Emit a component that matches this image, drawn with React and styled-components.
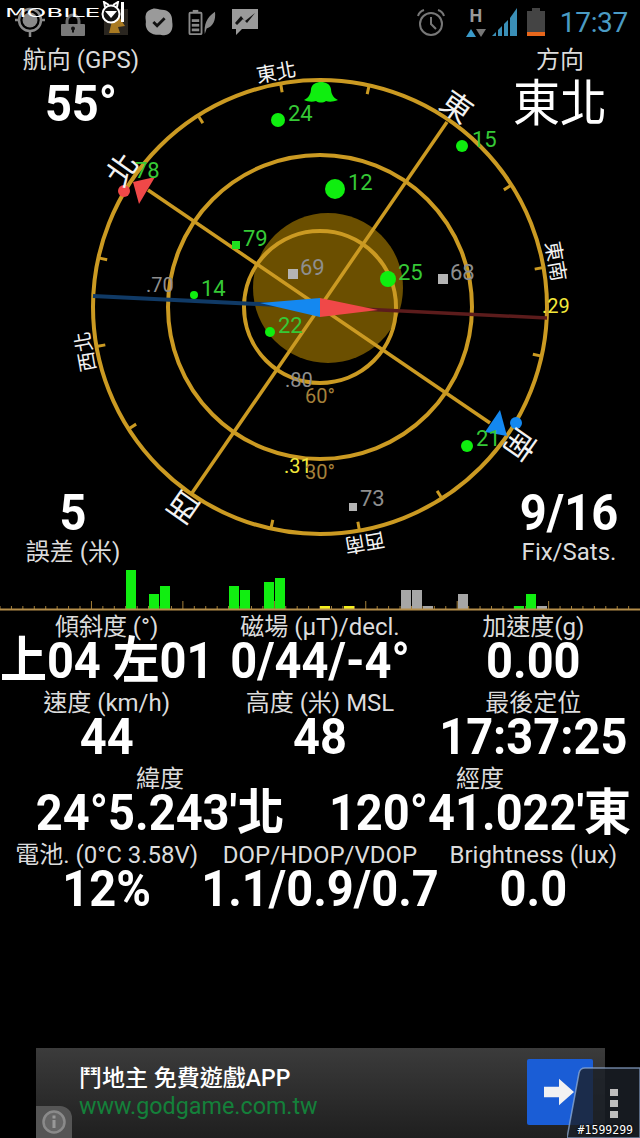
import React from 'react';
import styled, { createGlobalStyle } from 'styled-components';

const CJK = '"Noto Sans CJK TC", sans-serif';
const FONT = `Roboto, ${CJK}`;

const GOLD = '#cb9a22';
const CX = 320;
const CY = 307;

const polar = (r, deg) => {
    const a = (deg * Math.PI) / 180;
    return [CX + r * Math.sin(a), CY - r * Math.cos(a)];
};

// ticks every 22.5 degrees, the four axes are drawn as full lines
const tickAngles = [-32.5, -10, 12.5, 57.5, 80, 102.5, 147.5, 170, 192.5, 237.5, 260, 282.5];

const compassLabels = [
    { text: '北', x: 120, y: 168, rot: -55, size: 31 },
    { text: '東', x: 458, y: 105, rot: 35, size: 31 },
    { text: '南', x: 522, y: 446, rot: 125, size: 31 },
    { text: '西', x: 182, y: 509, rot: 215, size: 31 },
    { text: '東北', x: 276, y: 71, rot: -10, size: 20 },
    { text: '東南', x: 557, y: 261, rot: 80, size: 20 },
    { text: '西南', x: 365, y: 544, rot: 170, size: 20 },
    { text: '西北', x: 84, y: 352, rot: 260, size: 20 },
];

const greenSats = [
    { id: '24', x: 278, y: 120, r: 7, lx: 288, ly: 113 },
    { id: '12', x: 335, y: 189, r: 10, lx: 348, ly: 182 },
    { id: '15', x: 462, y: 146, r: 6, lx: 472, ly: 139 },
    { id: '25', x: 388, y: 279, r: 8, lx: 398, ly: 272 },
    { id: '14', x: 194, y: 295, r: 4, lx: 201, ly: 288 },
    { id: '22', x: 270, y: 332, r: 5, lx: 278, ly: 325 },
    { id: '21', x: 467, y: 446, r: 6, lx: 476, ly: 438 },
];

const squareSats = [
    { id: '79', x: 236, y: 245, s: 8, lx: 243, ly: 238, color: '#1fe01f', text: '#36c936' },
    { id: '69', x: 293, y: 274, s: 10, lx: 300, ly: 267, color: '#b4b4b4', text: '#8e8e8e' },
    { id: '68', x: 443, y: 279, s: 10, lx: 450, ly: 272, color: '#b4b4b4', text: '#8e8e8e' },
    { id: '73', x: 353, y: 507, s: 8, lx: 360, ly: 498, color: '#b4b4b4', text: '#8e8e8e' },
];

const dials = [
    { text: '.70', x: 146, y: 292, color: '#8e8e8e' },
    { text: '.80', x: 285, y: 387, color: '#8e8e8e' },
    { text: '.29', x: 542, y: 313, color: '#f2e83a' },
    { text: '.31', x: 284, y: 473, color: '#f2e83a' },
    { text: '60°', x: 305, y: 403, color: '#a5803a' },
    { text: '30°', x: 305, y: 479, color: '#a5803a' },
];

const bars = [
    { x: 126, top: 570, c: '#11ee11' },
    { x: 149, top: 594, c: '#11ee11' },
    { x: 160, top: 586, c: '#11ee11' },
    { x: 229, top: 586, c: '#11ee11' },
    { x: 240, top: 590, c: '#11ee11' },
    { x: 264, top: 582, c: '#11ee11' },
    { x: 275, top: 578, c: '#11ee11' },
    { x: 320, top: 606, c: '#f4f01e' },
    { x: 344, top: 606, c: '#f4f01e' },
    { x: 401, top: 590, c: '#a6a6a6' },
    { x: 412, top: 590, c: '#a6a6a6' },
    { x: 423, top: 606, c: '#a6a6a6' },
    { x: 458, top: 594, c: '#a6a6a6' },
    { x: 514, top: 606, c: '#11ee11' },
    { x: 526, top: 594, c: '#11ee11' },
    { x: 537, top: 606, c: '#a6a6a6' },
];

const chartTicks = Array.from({ length: 56 }, (_, i) => i * 11.43);

const rows = [
    {
        cols: 3,
        items: [
            ['傾斜度 (°)', '上04 左01'],
            ['磁場 (µT)/decl.', '0/44/-4°'],
            ['加速度(g)', '0.00'],
        ],
    },
    {
        cols: 3,
        items: [
            ['速度 (km/h)', '44'],
            ['高度 (米) MSL', '48'],
            ['最後定位', '17:37:25'],
        ],
    },
    {
        cols: 2,
        items: [
            ['緯度', "24°5.243'北"],
            ['經度', "120°41.022'東"],
        ],
    },
    {
        cols: 3,
        items: [
            ['電池. (0°C 3.58V)', '12%'],
            ['DOP/HDOP/VDOP', '1.1/0.9/0.7'],
            ['Brightness (lux)', '0.0'],
        ],
    },
];

function CompassDrawing() {
    return (
        <CompassSvg viewBox="0 40 640 520">
            <circle cx="328" cy="288" r="75" fill="#6b4f00" />
            {[76, 152, 227].map((r) => (
                <circle key={r} cx={CX} cy={CY} r={r} fill="none" stroke={GOLD} strokeWidth="4" />
            ))}
            <line x1="148" y1="190" x2="490" y2="423" stroke={GOLD} strokeWidth="3.5" />
            <line x1="447" y1="122" x2="192" y2="493" stroke={GOLD} strokeWidth="3.5" />
            {tickAngles.map((deg) => {
                const [x1, y1] = polar(227, deg);
                const [x2, y2] = polar(218, deg);
                return <line key={deg} x1={x1} y1={y1} x2={x2} y2={y2} stroke={GOLD} strokeWidth="3" />;
            })}

            <line x1="93" y1="296" x2="320" y2="307" stroke="#103a66" strokeWidth="4" />
            <line x1="320" y1="307" x2="547" y2="318" stroke="#5c1c1c" strokeWidth="3.5" />
            <polygon points="260,303 320,298 320,317" fill="#1488f0" />
            <polygon points="320,298 378,310 320,317" fill="#f04848" />

            <circle cx="124" cy="191" r="6" fill="#f04848" />
            <polygon points="133,182 155,177 139,204" fill="#f04848" />
            <circle cx="516" cy="423" r="6" fill="#1488f0" />
            <polygon points="500,410 485,432 507,436" fill="#1488f0" />

            <path
                d="M304 100 C309 98 311 93 311 89 C312 84 316 82 321 82 C326 82 330 84 331 89 C331 93 333 98 338 100 C333 102 329 102 326 101 C323 103 319 103 316 101 C313 102 308 102 304 100 Z"
                fill="#0fee0f"
            />

            {compassLabels.map((l) => (
                <CompassLabel
                    key={l.text}
                    x={l.x}
                    y={l.y}
                    fontSize={l.size}
                    transform={`rotate(${l.rot} ${l.x} ${l.y})`}
                >
                    {l.text}
                </CompassLabel>
            ))}

            {greenSats.map((s) => (
                <g key={s.id}>
                    <circle cx={s.x} cy={s.y} r={s.r} fill="#0fee0f" />
                    <SatLabel x={s.lx} y={s.ly} fill="#36c936">
                        {s.id}
                    </SatLabel>
                </g>
            ))}
            {squareSats.map((s) => (
                <g key={s.id}>
                    <rect x={s.x - s.s / 2} y={s.y - s.s / 2} width={s.s} height={s.s} fill={s.color} />
                    <SatLabel x={s.lx} y={s.ly} fill={s.text}>
                        {s.id}
                    </SatLabel>
                </g>
            ))}
            <SatLabel x={135} y={170} fill="#36c936">
                78
            </SatLabel>
            {dials.map((d) => (
                <DialText key={d.text} x={d.x} y={d.y} fill={d.color}>
                    {d.text}
                </DialText>
            ))}
        </CompassSvg>
    );
}

function SignalChart() {
    return (
        <ChartSvg viewBox="0 565 640 47">
            {chartTicks.map((x, i) => {
                const tall = i % 8 === 0 && i > 0;
                return <line key={x} x1={x} y1={tall ? 601 : 606} x2={x} y2="609" stroke="#a5803a" strokeWidth="1" />;
            })}
            {bars.map((b) => (
                <rect key={b.x} x={b.x} y={b.top} width="10" height={609 - b.top} fill={b.c} />
            ))}
            <line x1="0" y1="609.5" x2="640" y2="609.5" stroke="#b58e4a" strokeWidth="2" />
        </ChartSvg>
    );
}

function LeftIcons() {
    return (
        <IconRow>
            <Slot $w={43}>
                <svg width="30" height="34" viewBox="0 0 30 34" fill="none" stroke="#8a8a8a" strokeWidth="2.5">
                    <circle cx="15" cy="15" r="11" />
                    <circle cx="15" cy="15" r="7.5" fill="#8a8a8a" stroke="none" />
                    <path d="M15 26v6M0 15h4M26 15h4" />
                </svg>
            </Slot>
            <Slot $w={43}>
                <svg width="24" height="28" viewBox="0 0 24 28">
                    <path d="M6 17V13a6 6 0 0 1 12 0v4" fill="none" stroke="#6f6f6f" strokeWidth="3" />
                    <rect x="0" y="16" width="24" height="12" rx="1" fill="#7a7a7a" />
                    <circle cx="12" cy="20.5" r="2" fill="#111" />
                    <rect x="11" y="20.5" width="2" height="4" fill="#111" />
                </svg>
            </Slot>
            <Slot $w={43}>
                <svg width="24" height="26" viewBox="0 0 24 26">
                    <rect width="24" height="26" fill="#2a2620" />
                    <path d="M5 24 L8 12 L15 8 L21 17 L14 18 L16 24 Z" fill="#a97a22" />
                </svg>
            </Slot>
            <Slot $w={43}>
                <svg width="30" height="30" viewBox="0 0 32 32">
                    <path
                        d="M9 2 C13 1 15 3 19 3 C26 3 30 8 30 14 C30 17 31 19 30 23 C29 28 24 31 20 30 C16 29 14 30 10 29 C4 27 1 22 2 16 C2 13 1 11 2 8 C3 4 6 3 9 2 Z"
                        fill="#9a9a9a"
                    />
                    <path d="M10 16 l4 4 l8 -8" fill="none" stroke="#111" strokeWidth="3" />
                </svg>
            </Slot>
            <Slot $w={43}>
                <svg width="30" height="26" viewBox="0 0 30 28">
                    <rect x="1.5" y="4" width="13" height="23" rx="1" fill="none" stroke="#8a8a8a" strokeWidth="2" />
                    <rect x="5" y="1" width="6" height="3" fill="#8a8a8a" />
                    <rect x="4" y="11" width="8" height="3" fill="#8a8a8a" />
                    <rect x="4" y="16" width="8" height="3" fill="#8a8a8a" />
                    <rect x="4" y="21" width="8" height="3" fill="#8a8a8a" />
                    <path d="M18 27 C17 17 20 9 29 3 C30 12 27 19 20 21 Z" fill="#8a8a8a" />
                </svg>
            </Slot>
            <Slot $w={43}>
                <svg width="28" height="28" viewBox="0 0 28 28">
                    <path d="M1 1 H27 V21 H11 L5 27 V21 H1 Z" fill="#9a9a9a" />
                    <path d="M4 15 L10 8 L14 13 L24 5 L16 15 L12 11 L6 17 Z" fill="#111" />
                </svg>
            </Slot>
        </IconRow>
    );
}

function RightIcons() {
    return (
        <IconRow>
            <Slot $w={30}>
                <svg width="30" height="28" viewBox="0 0 30 28" fill="none" stroke="#777" strokeWidth="2">
                    <circle cx="15" cy="16" r="11" />
                    <path d="M15 9v7l5 5M2 8A9 9 0 0 1 8 2M28 8A9 9 0 0 0 22 2" />
                </svg>
            </Slot>
            <Slot $w={26} $ml={17}>
                <NetworkType>
                    H
                    <svg width="20" height="8" viewBox="0 0 20 8">
                        <polygon points="5,0 10,8 0,8" fill="#3a9ac9" />
                        <polygon points="10,0 20,0 15,8" fill="#777" />
                    </svg>
                </NetworkType>
            </Slot>
            <Slot $w={25} $ml={3}>
                <svg width="25" height="28" viewBox="0 0 25 28" fill="#3a8fb7">
                    <polygon points="0,28 4,24 4,28" />
                    <polygon points="6,22 10,18 10,28 6,28" />
                    <polygon points="12,16 16,12 16,28 12,28" />
                    <polygon points="18,10 25,0 25,28 18,28" />
                </svg>
            </Slot>
            <Slot $w={18} $ml={10}>
                <svg width="18" height="28" viewBox="0 0 18 28">
                    <rect x="5" y="0" width="8" height="3" fill="#444" />
                    <rect x="0" y="3" width="18" height="21" fill="#444" />
                    <rect x="0" y="24" width="18" height="4" fill="#e8671c" />
                </svg>
            </Slot>
            <Clock>17:37</Clock>
        </IconRow>
    );
}

function Readout({ label, value }) {
    return (
        <ReadoutBox>
            <ReadoutLabel>{label}</ReadoutLabel>
            <ReadoutValue>{value}</ReadoutValue>
        </ReadoutBox>
    );
}

export default function App() {
    return (
        <Page>
            <GlobalStyle />
            <StatusBar>
                <LeftIcons />
                <RightIcons />
            </StatusBar>
            <Watermark>
                <LogoText>MOBILE</LogoText>
                <svg width="24" height="24" viewBox="0 0 24 24">
                    <circle cx="10" cy="13" r="8.5" fill="#111" stroke="#fff" strokeWidth="2" />
                    <path d="M4 6 L3 1 L8 4 M16 6 L17 1 L12 4" fill="none" stroke="#fff" strokeWidth="2" />
                    <path d="M4 10 L16 10 L10 17 Z" fill="#fff" />
                    <rect x="20" y="1" width="3" height="20" fill="#fff" />
                </svg>
            </Watermark>

            <CompassPanel>
                <CompassDrawing />
                <Corner $top="1px" $left="0" $width="162px">
                    <CornerLabel>航向 (GPS)</CornerLabel>
                    <CornerValue>55°</CornerValue>
                </Corner>
                <Corner $top="1px" $right="0" $width="160px">
                    <CornerLabel>方向</CornerLabel>
                    <CornerValue $thin>東北</CornerValue>
                </Corner>
                <Corner $bottom="-6px" $left="0" $width="146px">
                    <CornerValue>5</CornerValue>
                    <CornerLabel $under>誤差 (米)</CornerLabel>
                </Corner>
                <Corner $bottom="-6px" $right="0" $width="142px">
                    <CornerValue>9/16</CornerValue>
                    <CornerLabel $under>Fix/Sats.</CornerLabel>
                </Corner>
            </CompassPanel>

            <SignalChart />

            <ReadoutGrid>
                {rows.map((row) => (
                    <ReadoutRow key={row.items[0][0]} $cols={row.cols}>
                        {row.items.map(([label, value]) => (
                            <Readout key={label} label={label} value={value} />
                        ))}
                    </ReadoutRow>
                ))}
            </ReadoutGrid>

            <AdBar>
                <AdText>
                    <AdTitle>鬥地主 免費遊戲APP</AdTitle>
                    <AdUrl>www.godgame.com.tw</AdUrl>
                </AdText>
                <AdButton>
                    <svg width="30" height="30" viewBox="0 0 34 30">
                        <polygon points="0,9 17,9 17,0 34,15 17,30 17,21 0,21" fill="#f2f2f2" />
                    </svg>
                </AdButton>
                <InfoTab>
                    <svg width="26" height="26" viewBox="0 0 26 26" fill="none">
                        <circle cx="13" cy="13" r="10.5" stroke="#8a8a8a" strokeWidth="2.5" fill="#666" />
                        <rect x="11.5" y="11" width="3" height="8" fill="#999" />
                        <rect x="11.5" y="6.5" width="3" height="3" fill="#999" />
                    </svg>
                </InfoTab>
            </AdBar>
            <MenuKey>
                <KeyShape viewBox="0 0 73 71">
                    <path
                        d="M0 71 L12 6 Q13 1 18 1 L73 1 L73 71 Z"
                        fill="rgba(28,32,40,0.8)"
                        stroke="rgba(150,180,220,0.7)"
                        strokeWidth="1.5"
                    />
                </KeyShape>
                <MenuDot />
                <MenuDot />
                <MenuDot />
            </MenuKey>
            <PostId>#1599299</PostId>
        </Page>
    );
}

const GlobalStyle = createGlobalStyle`
    body {
        margin: 0;
        background: #000;
    }
`;

const Page = styled.div`
    position: relative;
    width: 640px;
    height: 1138px;
    overflow: hidden;
    background: #000;
    color: #fff;
    font-family: ${FONT};
    display: flex;
    flex-direction: column;
`;

const StatusBar = styled.div`
    height: 40px;
    padding: 4px 12px 0 8px;
    box-sizing: border-box;
    display: flex;
    justify-content: space-between;
    align-items: center;
`;

const IconRow = styled.div`
    display: flex;
    align-items: center;
`;

const Slot = styled.div`
    width: ${(p) => p.$w}px;
    margin-left: ${(p) => p.$ml || 0}px;
    display: flex;
    justify-content: center;
`;

const NetworkType = styled.div`
    display: flex;
    flex-direction: column;
    align-items: center;
    gap: 5px;
    font-size: 18px;
    font-weight: 700;
    line-height: 16px;
    color: #999;
`;

const Clock = styled.div`
    font-size: 28px;
    letter-spacing: -0.3px;
    color: #4a9bc4;
    margin-left: 15px;
`;

const Watermark = styled.div`
    position: absolute;
    top: 1px;
    left: 5px;
    display: flex;
    align-items: center;
    gap: 2px;
`;

const LogoText = styled.span`
    display: inline-block;
    width: 94px;
    font-family: "DejaVu Sans", sans-serif;
    font-size: 12px;
    line-height: 12px;
    color: #fff;
    transform: scaleX(2.08);
    transform-origin: left center;
`;

const CompassPanel = styled.div`
    position: relative;
    height: 525px;
`;

const CompassSvg = styled.svg`
    display: block;
    width: 640px;
    height: 520px;
    overflow: visible;
`;

const CompassLabel = styled.text`
    font-family: ${CJK};
    fill: #f2f2f2;
    text-anchor: middle;
    dominant-baseline: central;
`;

const SatLabel = styled.text`
    font-family: Roboto, sans-serif;
    font-size: 22px;
    dominant-baseline: central;
`;

const DialText = styled.text`
    font-family: Roboto, sans-serif;
    font-size: 20px;
`;

const Corner = styled.div`
    position: absolute;
    top: ${(p) => p.$top || 'auto'};
    bottom: ${(p) => p.$bottom || 'auto'};
    left: ${(p) => p.$left || 'auto'};
    right: ${(p) => p.$right || 'auto'};
    width: ${(p) => p.$width};
    display: flex;
    flex-direction: column;
    align-items: center;
`;

const CornerLabel = styled.div`
    font-size: 24px;
    line-height: 38px;
    margin-top: ${(p) => (p.$under ? '-5px' : '0')};
    color: #dcdcdc;
    white-space: nowrap;
`;

const CornerValue = styled.div`
    font-size: 47px;
    font-weight: ${(p) => (p.$thin ? 400 : 700)};
    line-height: 50px;
    white-space: nowrap;
    transform: scaleY(1.06);
`;

const ChartSvg = styled.svg`
    display: block;
    width: 640px;
    height: 47px;
`;

const ReadoutGrid = styled.div`
    display: flex;
    flex-direction: column;
    margin-top: -1px;
`;

const ReadoutRow = styled.div`
    display: grid;
    grid-template-columns: repeat(${(p) => p.$cols}, minmax(0, 1fr));
    height: 76px;
`;

const ReadoutBox = styled.div`
    min-width: 0;
    display: flex;
    flex-direction: column;
    align-items: center;
    white-space: nowrap;
`;

const ReadoutLabel = styled.div`
    font-size: 24px;
    line-height: 32px;
    color: #dcdcdc;
`;

const ReadoutValue = styled.div`
    font-size: 47px;
    font-weight: 700;
    line-height: 42px;
    margin-top: -3px;
    transform: scaleY(1.06);
`;

const AdBar = styled.div`
    position: relative;
    margin: auto 0 0 36px;
    width: 569px;
    height: 90px;
    box-sizing: border-box;
    padding: 11px 12px 14px 43px;
    background: linear-gradient(#3b3b3b, #1f1f1f);
    display: flex;
    justify-content: space-between;
`;

const AdText = styled.div`
    padding-top: 4px;
    display: flex;
    flex-direction: column;
`;

const AdTitle = styled.div`
    font-size: 23px;
    line-height: 32px;
    font-weight: 500;
    color: #fff;
`;

const AdUrl = styled.div`
    font-size: 23.3px;
    line-height: 22px;
    color: #14803a;
`;

const AdButton = styled.div`
    width: 66px;
    height: 66px;
    box-sizing: border-box;
    padding-right: 3px;
    border-radius: 2px;
    background: #1a5dd6;
    display: flex;
    align-items: center;
    justify-content: center;
`;

const InfoTab = styled.div`
    position: absolute;
    left: 0;
    bottom: 0;
    width: 36px;
    height: 32px;
    border-top-right-radius: 12px;
    background: #555;
    display: flex;
    align-items: center;
    justify-content: center;
`;

const MenuKey = styled.div`
    position: absolute;
    right: 0;
    bottom: 0;
    width: 73px;
    height: 71px;
    box-sizing: border-box;
    padding: 22px 0 0 43px;
    display: flex;
    flex-direction: column;
    gap: 4px;
`;

const KeyShape = styled.svg`
    position: absolute;
    top: 0;
    left: 0;
    width: 73px;
    height: 71px;
`;

const MenuDot = styled.div`
    position: relative;
    width: 8px;
    height: 7px;
    background: #bdbdbd;
`;

const PostId = styled.div`
    position: absolute;
    right: 7px;
    bottom: 0;
    font-family: "DejaVu Sans Mono", monospace;
    font-size: 11.5px;
    line-height: 15px;
    color: #fff;
    text-shadow: 0 0 2px #000, 0 0 2px #000;
`;
